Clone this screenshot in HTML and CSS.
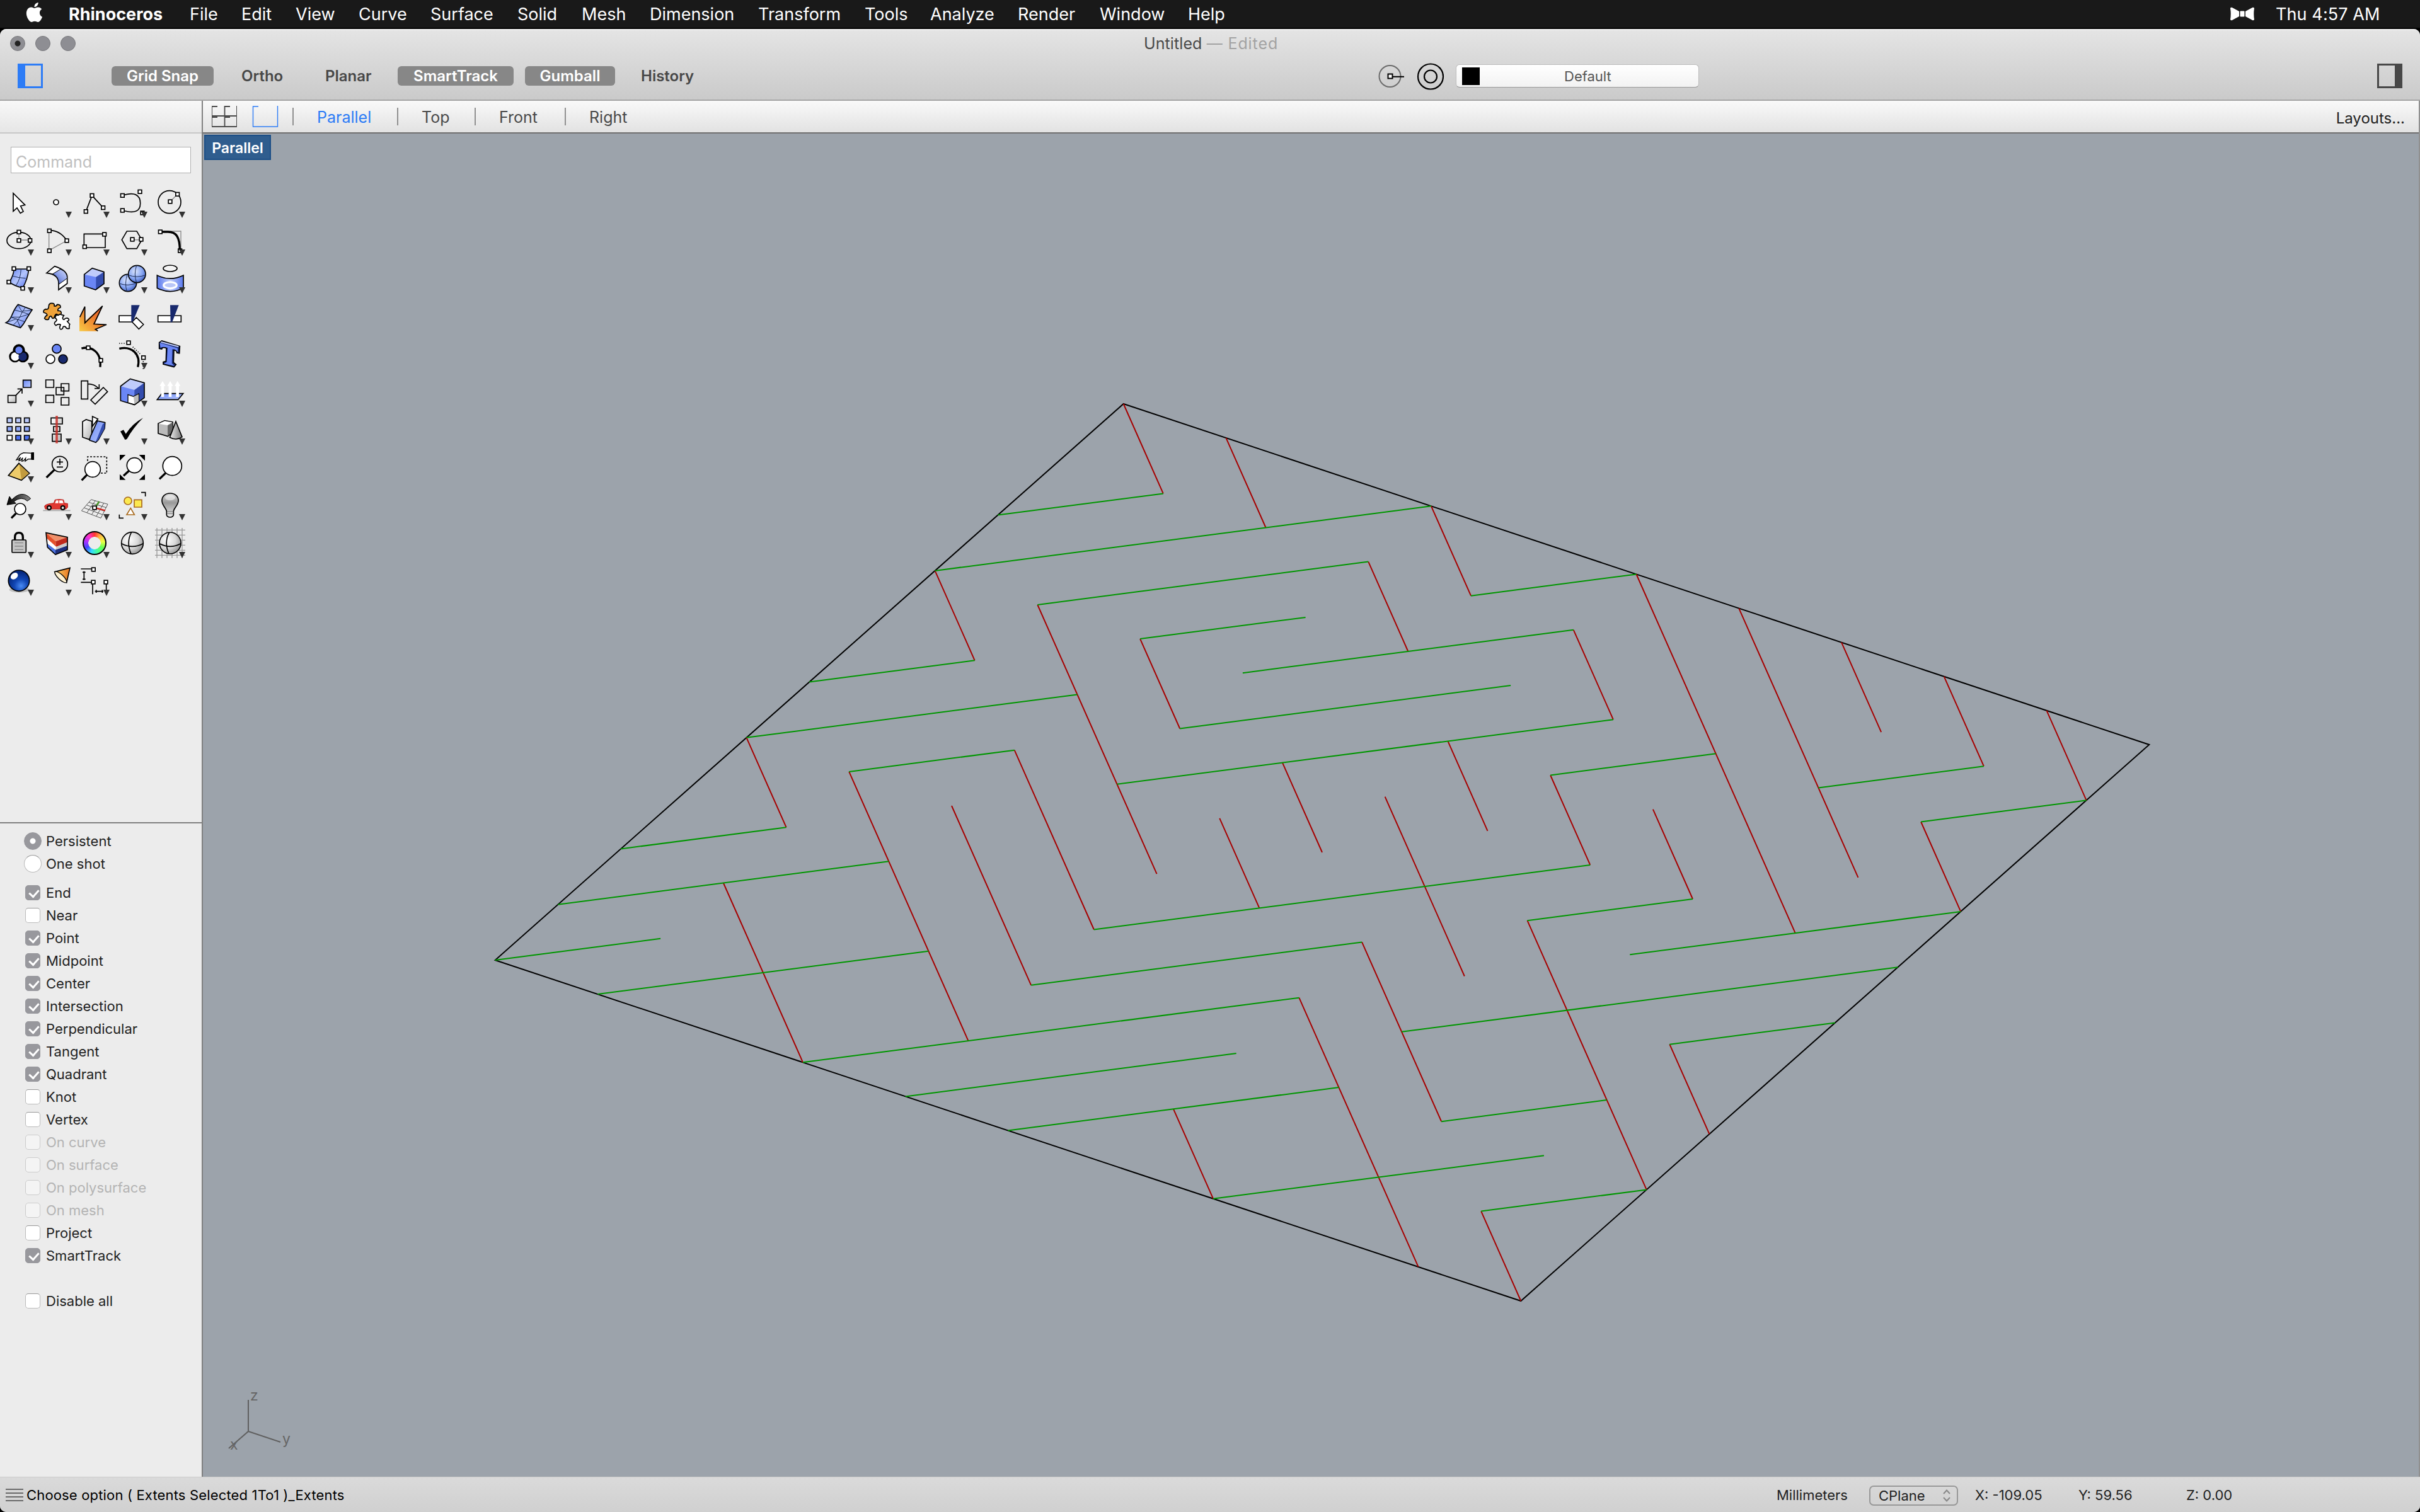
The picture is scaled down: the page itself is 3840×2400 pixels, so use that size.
FILE: index.html
```html
<!DOCTYPE html>
<html lang="en">
<head>
<meta charset="utf-8">
<title>Untitled — Rhinoceros</title>
<link rel="stylesheet" href="styles.css">
</head>
<body>
<svg class="defs" width="0" height="0" aria-hidden="true">
  <defs>
    <rect id="h" x="-8.5" y="-8.5" width="17" height="17" fill="#fff" stroke="#000" stroke-width="5"/>
    <linearGradient id="blue" x1="0" y1="0" x2="1" y2="1"><stop offset="0" stop-color="#5f7ff0"/><stop offset=".5" stop-color="#b4c5fb"/><stop offset="1" stop-color="#4c6cf0"/></linearGradient>
    <linearGradient id="blueH" x1="0" y1="0" x2="1" y2="0"><stop offset="0" stop-color="#5878ee"/><stop offset=".5" stop-color="#c3cffb"/><stop offset="1" stop-color="#5878ee"/></linearGradient>
    <linearGradient id="paleBlue" x1="0" y1="0" x2="1" y2="1"><stop offset="0" stop-color="#6a8af8"/><stop offset="1" stop-color="#b9c8fb"/></linearGradient>
    <linearGradient id="bend" x1="1" y1="0" x2="0" y2="1"><stop offset="0" stop-color="#d8e0fc"/><stop offset=".5" stop-color="#8a9ee8"/><stop offset="1" stop-color="#1c3796"/></linearGradient>
    <radialGradient id="ballB" cx=".4" cy=".35" r=".7"><stop offset="0" stop-color="#dbe5fd"/><stop offset=".6" stop-color="#86a5f2"/><stop offset="1" stop-color="#3b5bbd"/></radialGradient>
    <radialGradient id="ballG" cx=".35" cy=".35" r=".75"><stop offset="0" stop-color="#fff"/><stop offset=".55" stop-color="#d8d8d8"/><stop offset="1" stop-color="#8c8c8c"/></radialGradient>
    <radialGradient id="ballD" cx=".6" cy=".75" r=".8"><stop offset="0" stop-color="#4a8cf4"/><stop offset=".4" stop-color="#1146b4"/><stop offset="1" stop-color="#001c68"/></radialGradient>
    <linearGradient id="grey" x1="0" y1="0" x2="1" y2="1"><stop offset="0" stop-color="#fff"/><stop offset="1" stop-color="#b5b5b5"/></linearGradient>
    <linearGradient id="greyH" x1="0" y1="0" x2="1" y2="0"><stop offset="0" stop-color="#eee"/><stop offset="1" stop-color="#777"/></linearGradient>
    <linearGradient id="bulb" x1="0" y1="0" x2="0" y2="1"><stop offset="0" stop-color="#ddd"/><stop offset=".4" stop-color="#999"/><stop offset="1" stop-color="#eee"/></linearGradient>
    <linearGradient id="fire" x1="0" y1="1" x2="1" y2="0"><stop offset="0" stop-color="#f8cb45"/><stop offset=".55" stop-color="#ee7a2c"/><stop offset="1" stop-color="#e3552a"/></linearGradient>
    <linearGradient id="cone" x1="0" y1="0" x2="1" y2="0"><stop offset="0" stop-color="#fbd26a"/><stop offset="1" stop-color="#e8741e"/></linearGradient>
    <linearGradient id="swoosh" x1="0" y1="0" x2="1" y2="0"><stop offset="0" stop-color="#000"/><stop offset="1" stop-color="#888"/></linearGradient>
  </defs>
</svg>

<header class="menubar">
  <svg class="apple" viewBox="0 0 24 24"><path d="M12.152 6.896c-.948 0-2.415-1.078-3.96-1.04-2.04.027-3.91 1.183-4.961 3.014-2.117 3.675-.546 9.103 1.519 12.09 1.013 1.454 2.208 3.09 3.792 3.039 1.52-.065 2.09-.987 3.935-.987 1.831 0 2.35.987 3.96.948 1.637-.026 2.676-1.48 3.676-2.948 1.156-1.688 1.636-3.325 1.662-3.415-.039-.013-3.182-1.221-3.22-4.857-.026-3.04 2.48-4.494 2.597-4.559-1.429-2.09-3.623-2.324-4.39-2.376-2-.156-3.675 1.09-4.61 1.09zM15.53 3.83c.843-1.012 1.4-2.427 1.245-3.83-1.207.052-2.662.805-3.532 1.818-.78.896-1.454 2.338-1.273 3.714 1.338.104 2.715-.688 3.559-1.701"/></svg>
  <nav class="menus">
    <b>Rhinoceros</b><span>File</span><span>Edit</span><span>View</span><span>Curve</span><span>Surface</span><span>Solid</span><span>Mesh</span><span>Dimension</span><span>Transform</span><span>Tools</span><span>Analyze</span><span>Render</span><span>Window</span><span>Help</span>
  </nav>
  <svg class="bow" viewBox="0 0 40 22"><path d="M1 2Q2 0 4 1L15 7V15L4 21Q2 22 1 20Q2.500 11 1 2ZM39 2Q38 0 36 1L25 7V15L36 21Q38 22 39 20Q37.500 11 39 2Z"/><rect x="16.500" y="6.500" width="7" height="9" rx="1"/></svg>
  <span class="clock">Thu 4:57 AM</span>
</header>

<div class="window">
  <div class="titlebar">
    <div class="title"><div class="lights"><i class="dirty"></i><i></i><i></i></div><p>Untitled <span>— Edited</span></p></div>
    <div class="toolbar">
      <svg class="panel left" viewBox="0 0 40 39"><path d="M0 0H40V39H0ZM12 3V36H37V3Z" fill-rule="evenodd"/></svg>
      <div class="toggles">
        <span class="on t1">Grid Snap</span><span class="t2">Ortho</span><span class="t3">Planar</span><span class="on t4">SmartTrack</span><span class="on t5">Gumball</span><span class="t6">History</span>
      </div>
      <svg class="rings" viewBox="0 0 104 44"><circle cx="17.500" cy="22" r="17" fill="none" stroke="#6c6c6c" stroke-width="2"/><path d="M21 22.800H40" stroke="#000" stroke-width="2"/><rect x="14.500" y="18.500" width="7" height="7" fill="#fff" stroke="#000" stroke-width="2"/><g fill="none" stroke="#000" stroke-width="2.200"><circle cx="82" cy="22.500" r="20"/><circle cx="82" cy="22.500" r="10"/></g></svg>
      <div class="layer"><i></i><span>Default</span></div>
      <svg class="panel right" viewBox="0 0 40 39"><path d="M0 0H40V39H0ZM3 3V36H28V3Z" fill-rule="evenodd"/></svg>
    </div>
  </div>

  <div class="main">
    <aside class="sidebar">
      <div class="sidehead"></div>
      <div class="command">Command</div>
      <div class="tools">
        <!-- select / points / curves -->
        <div><svg viewBox="0 213 180 180"><path d="M63 260V346L81 330L97 355L111 347L98 321L119 316Z" fill="#fff" stroke="#000" stroke-width="5"/></svg></div>
        <div class="m"><svg viewBox="180 213 180 180"><circle cx="267" cy="303" r="12" fill="#fff" stroke="#000" stroke-width="5"/></svg></div>
        <div class="m"><svg viewBox="360 213 180 180"><path class="k" d="M409 347L438 271L491 329"/><use href="#h" x="409" y="347"/><use href="#h" x="438" y="271"/><use href="#h" x="491" y="329"/></svg></div>
        <div class="m"><svg viewBox="540 213 180 180"><path class="k" d="M583 271C640 252 668 268 668 308C668 348 640 358 583 342"/><use href="#h" x="583" y="271"/><use href="#h" x="583" y="342"/><use href="#h" x="666" y="253"/><use href="#h" x="678" y="354"/></svg></div>
        <div class="m"><svg viewBox="720 213 180 180"><circle class="k" cx="807" cy="302" r="54"/><path class="g" d="M810 300L845 265"/><use href="#h" x="810" y="300"/><use href="#h" x="845" y="265"/></svg></div>

        <div class="m"><svg viewBox="0 393 180 180"><ellipse class="k" cx="90" cy="485" rx="57" ry="39"/><path class="g" d="M90 445V483H143"/><use href="#h" x="90" y="445"/><use href="#h" x="90" y="485"/><use href="#h" x="143" y="485"/></svg></div>
        <div class="m"><svg viewBox="180 393 180 180"><path class="g" d="M233 440V533L318 486"/><path class="k" d="M235 437Q286 437 318 485"/><use href="#h" x="235" y="439"/><use href="#h" x="235" y="534"/><use href="#h" x="318" y="486"/></svg></div>
        <div class="m"><svg viewBox="360 393 180 180"><path class="k" d="M400 454H501V519H400Z"/><use href="#h" x="497" y="456"/><use href="#h" x="403" y="515"/></svg></div>
        <div class="m"><svg viewBox="540 393 180 180"><path class="k" d="M580 482L604 441H651L675 482L651 524H604Z"/><path class="g" d="M630 482H672"/><use href="#h" x="630" y="480"/><use href="#h" x="672" y="480"/></svg></div>
        <div class="m"><svg viewBox="720 393 180 180"><path class="g" d="M763 441H861V534"/><path class="k bold" d="M763 444H800C840 444 856 470 856 534"/><use href="#h" x="763" y="444"/><use href="#h" x="857" y="534"/></svg></div>

        <!-- surfaces / solids -->
        <div class="m"><svg viewBox="0 573 180 180"><path d="M66 621H137Q132 670 108 711Q74 704 44 684Q66 650 66 621Z" fill="url(#blue)" stroke="#000" stroke-width="5"/><path d="M100 621Q98 668 76 700M58 654Q90 664 122 665" class="n"/><use href="#h" x="66" y="619"/><use href="#h" x="137" y="619"/><use href="#h" x="42" y="683"/><use href="#h" x="108" y="713"/></svg></div>
        <div class="m"><svg viewBox="180 573 180 180"><path d="M260 608Q322 628 320 662V690L279 720V690Q280 646 222 640Z" fill="#fff" stroke="#000" stroke-width="5"/><path d="M288 622Q320 636 320 665L280 694Q280 654 250 645Z" fill="url(#bend)" stroke="#000" stroke-width="3"/></svg></div>
        <div class="m"><svg viewBox="360 573 180 180"><path d="M401 647L439 617L495 635V691L455 720L401 702Z" fill="#6a86f5"/><path d="M401 647L439 617L495 635L457 659Z" fill="#c0ccfb"/><path d="M457 659L495 635V691L457 720Z" fill="#344dae"/><path class="k" d="M401 647L439 617L495 635V691L455 720L401 702Z"/></svg></div>
        <div class="m"><svg viewBox="540 573 180 180"><circle cx="609" cy="687" r="41" fill="url(#ballB)" stroke="#000" stroke-width="5"/><path class="n" d="M568 690Q609 705 650 688M606 646Q592 690 604 728"/><circle cx="652" cy="645" r="41" fill="url(#ballB)" stroke="#000" stroke-width="5"/><path class="n" d="M611 650Q652 665 693 650M650 604Q636 646 650 686"/></svg></div>
        <div class="m"><svg viewBox="720 573 180 180"><ellipse cx="810" cy="618" rx="33" ry="15" fill="#f4f4f4" stroke="#000" stroke-width="5"/><path d="M748 651Q810 682 873 651V712Q810 744 748 712Z" fill="url(#blueH)" stroke="#000" stroke-width="5"/><ellipse cx="810" cy="698" rx="31" ry="15" fill="#b9c6f7" stroke="#fff" stroke-width="9"/></svg></div>

        <div class="m"><svg viewBox="0 753 180 180"><path d="M86 790L153 815Q140 834 126 858Q116 880 97 901L28 877Q48 866 58 838Q70 808 86 790Z" fill="url(#blue)" stroke="#000" stroke-width="5"/><path class="n" d="M122 802Q104 826 94 850Q82 874 62 889M67 815L138 836M50 850L118 872M86 792L103 822L150 818M50 850L94 850L138 836M30 876L80 858L97 900"/></svg></div>
        <div><svg viewBox="180 753 180 180"><path d="M232 798Q232 784 246 784Q262 784 258 797Q268 800 272 790Q290 790 288 804Q272 810 276 820Q292 818 292 832Q284 846 270 836Q262 836 258 852Q250 862 244 846Q234 844 232 860Q218 866 212 856Q216 844 224 842Q226 832 208 828Q204 816 218 812Q232 816 232 798Z" fill="#efa33b" stroke="#000" stroke-width="5"/><path d="M268 838Q276 846 284 836L304 842Q292 858 304 862Q316 850 326 858Q332 866 320 870Q328 880 332 884Q328 890 330 904Q316 908 312 896Q300 890 298 904Q286 914 284 900L288 886Q278 880 266 890Q252 880 266 870Q276 862 262 854Z" fill="#fff" stroke="#000" stroke-width="5"/></svg></div>
        <div><svg viewBox="360 753 180 180"><path d="M378 855L403 800L407 868L488 797L451 884L507 886L454 907L466 917H378Z" fill="url(#fire)"/><path class="k" d="M380 850L404 800V878L488 797L447 883L507 886L454 908L466 916"/></svg></div>
        <div><svg viewBox="540 753 180 180"><path d="M567 843H630V873H567ZM649 852L683 885L661 907L629 873Z" fill="#fff" stroke="#000" stroke-width="5"/><path d="M625 793H665L634 868L625 875Z" fill="#18296d"/></svg></div>
        <div><svg viewBox="720 753 180 180"><path d="M752 843H862V873H752Z" fill="#fff" stroke="#000" stroke-width="5"/><path d="M810 793H851L820 873L812 875Z" fill="#18296d"/></svg></div>

        <!-- booleans / points / text -->
        <div class="m"><svg viewBox="0 933 180 180"><g stroke="#000" stroke-width="14"><circle cx="90" cy="1008" r="22"/><circle cx="71" cy="1038" r="21"/><circle cx="109" cy="1038" r="21"/></g><circle cx="72" cy="1038" r="20" fill="#fff"/><circle cx="108" cy="1038" r="20" fill="#18296d"/><circle cx="90" cy="1007" r="19" fill="#6a86f5" stroke="#000" stroke-width="4"/></svg></div>
        <div><svg viewBox="180 933 180 180"><g stroke="#000" stroke-width="5"><circle cx="270" cy="1001" r="21" fill="#6a86f5"/><circle cx="240" cy="1050" r="21" fill="#fff"/><circle cx="300" cy="1050" r="21" fill="#18296d"/></g></svg></div>
        <div><svg viewBox="360 933 180 180"><path class="k bold" d="M388 999C430 988 484 1010 477 1088"/><use href="#h" x="420" y="996"/><use href="#h" x="480" y="1056"/></svg></div>
        <div class="m"><svg viewBox="540 933 180 180"><path class="k bold" d="M568 1000C626 986 672 1026 656 1088"/><path class="k" stroke-dasharray="4 7" d="M567 975H600M632 992L672 1030M682 1060V1100"/><use href="#h" x="612" y="972"/><use href="#h" x="683" y="1043"/></svg></div>
        <div><svg viewBox="720 933 180 180"><path d="M758 971L770 963L856 989L854 1022L842 1020Q844 1010 828 1006L826 1066L838 1076L828 1088L777 1074V1064L790 1060L792 998Q774 990 770 1002L758 1000Z" fill="#18296d" stroke="#000" stroke-width="5"/><path d="M760 972L846 998V1018Q838 1002 820 1003L818 1070L830 1082L780 1072L794 1064L798 996Q774 988 764 996Z" fill="#6a86f5"/><path d="M766 968L850 991" stroke="#c0ccfb" stroke-width="6"/></svg></div>

        <!-- transforms -->
        <div class="m"><svg viewBox="0 33 180 180"><path d="M38 143H76V177H38Z" fill="url(#grey)" stroke="#000" stroke-width="5"/><path d="M110 70H148V105H110Z" fill="url(#paleBlue)" stroke="#000" stroke-width="5"/><path class="k" d="M76 142L104 113M83 112H105V134"/></svg></div>
        <div><svg viewBox="180 33 180 180"><path class="k" d="M218 69H256V105H218ZM291 87H328V122H291ZM267 105H304V140H267ZM218 142H256V177H218ZM291 153H328V189H291Z"/></svg></div>
        <div><svg viewBox="360 33 180 180"><path class="k" d="M387 74H418V160H387ZM492 105L512 125L453 185L432 165ZM418 88Q448 88 468 108M472 90V110H450"/></svg></div>
        <div class="m"><svg viewBox="540 33 180 180"><path d="M574 99L620 64L687 83V154L640 188L574 168Z" fill="#6a86f5"/><path d="M574 99L620 64L687 83L640 117Z" fill="#c0ccfb"/><path d="M640 117L687 83V154L640 188Z" fill="#344dae"/><path d="M609 139L635 148L661 135V173L642 187L609 178Z" fill="#fff" stroke="#000" stroke-width="4"/><path d="M636 150L660 138V172L640 185Z" fill="#bbb"/><path class="k" d="M574 99L620 64L687 83V154L640 188L574 168Z"/></svg></div>
        <div class="m"><svg viewBox="720 33 180 180"><path d="M770 134H872L848 163H748Z" fill="url(#paleBlue)" stroke="#000" stroke-width="5"/><path d="M767 150V98H760L774 74L788 98H781V150ZM803 150V98H796L810 74L824 98H817V150ZM838 150V98H831L845 74L859 98H852V150Z" fill="#fff"/></svg></div>

        <!-- array / align / analyse -->
        <div class="m"><svg viewBox="0 213 180 180"><g stroke="#000" stroke-width="5"><path fill="#b9c8fb" d="M34 250H58V273H34ZM75 250H99V273H75ZM116 250H140V273H116Z"/><path fill="#93aafa" d="M34 291H58V314H34ZM75 291H99V314H75ZM116 291H140V314H116Z"/><path fill="#fff" d="M34 333H58V356H34Z"/><path fill="#4d70f0" d="M75 333H99V356H75ZM116 333H140V356H116Z"/></g></svg></div>
        <div class="m"><svg viewBox="180 213 180 180"><path d="M243 250H297V279H243ZM255 291H285V315H255ZM249 327H291V362H249Z" fill="url(#grey)" stroke="#000" stroke-width="5"/><path d="M270 240V371" stroke="#c8322b" stroke-width="11" opacity=".85"/></svg></div>
        <div class="m"><svg viewBox="360 213 180 180"><path d="M440 243L466 255L440 290Z" fill="#fff" stroke="#000" stroke-width="5"/><path d="M393 268L410 258L437 266V345L422 352L393 342Z" fill="url(#grey)" stroke="#000" stroke-width="5"/><path d="M464 264L500 272L498 300L468 355L456 367L426 356L430 340Z" fill="url(#paleBlue)" stroke="#000" stroke-width="5"/><path d="M489 279L498 274V300L466 358L456 364Z" fill="#344dae"/></svg></div>
        <div class="m"><svg viewBox="540 213 180 180"><path d="M573 314L588 307L599 326Q632 276 681 250Q632 300 604 351L595 354Z" fill="#000"/></svg></div>
        <div class="m"><svg viewBox="720 213 180 180"><path d="M753 277L784 263L822 270V318L799 338L753 324Z" fill="#bbb" stroke="#000" stroke-width="5"/><path d="M755 278L784 265L820 271L797 285Z" fill="#fff"/><path d="M798 286L821 272V318L798 336Z" fill="#666"/><path d="M837 267L867 341Q840 360 808 343Z" fill="url(#greyH)" stroke="#000" stroke-width="5"/></svg></div>

        <!-- view controls -->
        <div class="m"><svg viewBox="0 393 180 180"><path d="M90 466L140 514L102 547L40 524Z" fill="#edcb6a" stroke="#000" stroke-width="5"/><path d="M92 472L138 514L102 544Z" fill="#c29b3e"/><path d="M150 418L112 416L96 424L78 450L86 448L98 438L90 454L98 452L108 440L104 456L112 454L122 442L120 456L134 446H150Z" fill="#fff" stroke="#000" stroke-width="4"/><path d="M149 414H162V450H149Z"/></svg></div>
        <div><svg viewBox="180 393 180 180"><path class="k bold" d="M221 534L260 496"/><circle cx="285" cy="470" r="37" fill="none" stroke="#000" stroke-width="5"/><path class="k" d="M285 444V474M270 460H300M270 484H300"/></svg></div>
        <div><svg viewBox="360 393 180 180"><path class="k" stroke-dasharray="9 7" d="M417 455V435H508V513H480"/><path class="k bold" d="M389 547L415 520"/><circle cx="441" cy="495" r="37" fill="#fff" stroke="#000" stroke-width="5"/></svg></div>
        <div><svg viewBox="540 393 180 180"><path d="M570 426H598L570 454ZM690 426V454L662 426ZM570 545V518L598 545ZM690 545H662L690 518Z"/><path class="k bold" d="M588 526L614 502"/><circle cx="640" cy="476" r="36" fill="#fff" stroke="#000" stroke-width="5"/></svg></div>
        <div><svg viewBox="720 393 180 180"><path class="k bold" d="M759 541L790 511"/><circle cx="820" cy="479" r="45" fill="#fff" stroke="#000" stroke-width="5"/></svg></div>

        <div class="m"><svg viewBox="0 573 180 180"><path d="M33 664L45 624L56 640Q104 590 146 634L130 646Q104 620 66 648L76 657Z" fill="url(#swoosh)" stroke="#000" stroke-width="3"/><path class="k bold" d="M54 727L76 705"/><circle cx="96" cy="684" r="27" fill="#fff" stroke="#000" stroke-width="5"/></svg></div>
        <div class="m"><svg viewBox="180 573 180 180"><path d="M205 691H335" stroke="#aaa" stroke-width="5"/><path d="M212 672Q212 660 256 656L262 640Q282 636 302 640L306 656L322 658V676L314 684H216Z" fill="#e03832" stroke="#b8211d" stroke-width="3"/><path d="M262 656L267 643H278V656ZM282 656V643H298L302 656Z" fill="#fff"/><g fill="#ddd" stroke="#000" stroke-width="6"><circle cx="234" cy="678" r="9"/><circle cx="299" cy="678" r="9"/></g></svg></div>
        <div class="m"><svg viewBox="360 573 180 180"><path d="M434 639L513 661L480 727L388 692ZM454 644L413 702M474 650L436 711M494 656L458 719M423 652L505 677M412 665L497 694M400 678L489 711" fill="none" stroke="#555" stroke-width="3"/><path d="M456 672L472 648" stroke="#4a9a2a" stroke-width="7"/><path d="M460 680L501 691" stroke="#d42a22" stroke-width="7"/><use href="#h" x="450" y="678"/></svg></div>
        <div class="m"><svg viewBox="540 573 180 180"><path class="k" d="M672 605H692V624M568 710V727H588"/><g fill="#fce94f" stroke="#a8691c" stroke-width="5"><circle cx="609" cy="645" r="18"/><path d="M639 640H675V675H639Z"/><path fill="#fff" d="M622 680L640 711H603Z"/></g></svg></div>
        <div class="m"><svg viewBox="720 573 180 180"><path d="M810 609C836 609 850 626 849 646C848 666 828 680 826 694V712Q824 722 810 723Q795 722 793 712V694C791 680 771 666 771 646C770 626 784 609 810 609Z" fill="url(#bulb)" stroke="#000" stroke-width="5"/><path d="M796 696H824M796 706H824" stroke="#777" stroke-width="3"/><ellipse cx="810" cy="630" rx="24" ry="13" fill="#fff" opacity=".5"/></svg></div>

        <!-- display -->
        <div class="m"><svg viewBox="0 753 180 180"><path d="M71 832V818Q71 797 90 797Q109 797 109 818V832" fill="none" stroke="#000" stroke-width="10"/><rect x="57" y="831" width="67" height="60" rx="4" fill="#c4c4c4" stroke="#000" stroke-width="5"/><path d="M70 845H111M70 861H111M70 877H111" stroke="#888" stroke-width="4"/></svg></div>
        <div class="m"><svg viewBox="180 753 180 180"><path d="M219 797L321 818V878L264 901L226 866Z" fill="#fff"/><path d="M219 797L321 818L262 838Z" fill="#f0906a"/><path d="M219 797L264 838L268 864L221 822Z" fill="#e5502a"/><path d="M264 838L321 818V842L268 864Z" fill="#bf2a1c"/><path d="M222 846L264 878L321 858V878L264 901L226 868Z" fill="#4b72e0"/><path d="M264 878L321 858V878L264 901Z" fill="#1d2f7c"/><path d="M268 864L321 842V858L264 878Z" fill="#ccc"/><path class="k" d="M219 797L321 818V878L264 901L226 866Z"/></svg></div>
        <div class="m wheel"><i></i></div>
        <div><svg viewBox="540 753 180 180"><circle cx="630" cy="846" r="52" fill="url(#ballG)" stroke="#000" stroke-width="5"/><path class="k" d="M578 848Q630 876 682 848M626 794Q600 842 624 898"/></svg></div>
        <div class="m"><svg viewBox="720 753 180 180"><path d="M747 774V917M771 774V917M795 774V917M819 774V917M843 774V917M867 774V917M738 784H882M738 808H882M738 832H882M738 856H882M738 880H882M738 904H882" stroke="#999" stroke-width="4"/><circle cx="810" cy="846" r="51" fill="url(#ballG)" stroke="#000" stroke-width="5"/><path class="k" d="M759 848Q810 876 861 848M806 795Q780 842 804 897"/></svg></div>

        <div class="m"><svg viewBox="0 933 180 180"><ellipse cx="92" cy="1068" rx="48" ry="14" fill="#000" opacity=".18"/><circle cx="90" cy="1025" r="50" fill="url(#ballD)" stroke="#000" stroke-width="5"/><ellipse cx="68" cy="1003" rx="19" ry="14" fill="#fff" transform="rotate(-38 68 1003)"/></svg></div>
        <div class="m"><svg viewBox="180 933 180 180"><path d="M261 983L333 964L317 1034Z" fill="url(#cone)" stroke="#000" stroke-width="5"/><ellipse cx="289" cy="1008" rx="37" ry="12" transform="rotate(43 289 1008)" fill="#fdf0d0" stroke="#000" stroke-width="4"/></svg></div>
        <div class="m"><svg viewBox="360 933 180 180"><path class="k" d="M385 969H444M385 1033H444M400 980V1022M393 985H407M393 1018H407M441 1033V1090M506 1033V1080M452 1076H492M458 1069V1083M487 1069V1083"/><use href="#h" x="445" y="972"/><use href="#h" x="444" y="1032"/><use href="#h" x="504" y="1032"/></svg></div>
      </div>

      <div class="osnaps">
        <label class="radio sel"><i></i>Persistent</label>
        <label class="radio"><i></i>One shot</label>
        <div class="checks">
          <label class="c"><i></i>End</label>
          <label><i></i>Near</label>
          <label class="c"><i></i>Point</label>
          <label class="c"><i></i>Midpoint</label>
          <label class="c"><i></i>Center</label>
          <label class="c"><i></i>Intersection</label>
          <label class="c"><i></i>Perpendicular</label>
          <label class="c"><i></i>Tangent</label>
          <label class="c"><i></i>Quadrant</label>
          <label><i></i>Knot</label>
          <label><i></i>Vertex</label>
          <label class="off"><i></i>On curve</label>
          <label class="off"><i></i>On surface</label>
          <label class="off"><i></i>On polysurface</label>
          <label class="off"><i></i>On mesh</label>
          <label><i></i>Project</label>
          <label class="c"><i></i>SmartTrack</label>
          <label class="last"><i></i>Disable all</label>
        </div>
      </div>
    </aside>

    <section class="content">
      <div class="tabs">
        <svg class="four" viewBox="0 0 41 34"><path d="M0 1H9M20 1H29M0 16H40M0 18H9M20 18H29M0 33H40" fill="none" stroke="#4a4a4a" stroke-width="2"/><path d="M.500 0V34M39.500 0V34" stroke="#4a4a4a"/><path d="M20.500 0V34" stroke="#4a4a4a" stroke-width="1.800"/></svg>
        <svg class="one" viewBox="0 0 41 34"><path d="M9 1H.500V33H39.500V0" fill="none" stroke="#2d7cf6" stroke-width="1.400"/></svg>
        <span class="active">Parallel</span><span class="top">Top</span><span class="front">Front</span><span class="rt">Right</span>
        <span class="layouts">Layouts...</span>
      </div>
      <div class="viewport">
        <span class="vlabel">Parallel</span>
        <svg class="scene" viewBox="322 212 3516 2132">
          <!-- 10 x 10 ground grid, projected by the matrix below -->
          <g transform="matrix(162.76 54.1 -99.7 88.3 1782.7 641)" fill="none">
            <path stroke="#000" d="M0 0H10V10H0Z"/>
            <path stroke="#a60000" d="M0 0L1 1M1 0L2 1M3 0L4 1M0 3L1 4M1 3L4 6M2 3L3 4M3 1L4 2M5 1L6 2M5 0L9 4M6 0L9 3M7 0L8 1M8 0L9 1M9 0L10 1M0 6L1 7M1 6L4 9M2 5L4 7M2 6L4 8M1 8L3 10M4 5L5 6M4 4L5 5M5 4L7 6M5 3L6 4M6 3L7 4M7 3L8 4M9 2L10 3M7 5L10 8M6 6L8 8M6 7L9 10M6 9L7 10M9 6L10 7M9 9L10 10"/>
            <path stroke="#009600" d="M0 2L1 1M0 3L3 0M1 3L3 1M2 3L3 2M3 3L5 1M3 4L5 2M3 5L6 2M0 5L1 4M0 6L2 4M4 1L5 0M1 6L2 5M0 8L1 7M0 9L2 7M0 10L1 9M1 10L3 8M3 10L6 7M4 10L6 8M5 10L7 8M7 10L9 8M4 8L6 6M4 7L7 4M6 3L7 2M8 2L9 1M9 2L10 1M8 5L10 3M7 5L8 4M7 7L10 4M9 6L10 5M8 8L9 7M9 9L10 8"/>
          </g>
          <path d="M394 2222V2272L363 2299M394 2272L445 2289" fill="none" stroke="#606060" stroke-width="2"/>
          <g class="axis"><text x="397" y="2223">z</text><text x="448" y="2292">y</text><text x="365" y="2301">x</text></g>
        </svg>
      </div>
    </section>
  </div>

  <footer class="status">
    <svg class="burger" viewBox="0 0 28 20"><path d="M0 1H28M0 7H28M0 13H28M0 19H28" stroke="#6a6a6a" stroke-width="2"/></svg>
    <span class="prompt">Choose option ( Extents Selected 1To1 )_Extents</span>
    <span class="units">Millimeters</span>
    <span class="plane">CPlane<svg viewBox="0 0 14 20"><path d="M2 7L7 1.500L12 7M2 13L7 18.500L12 13" fill="none" stroke="#888" stroke-width="2"/></svg></span>
    <span class="x">X: -109.05</span><span class="y">Y: 59.56</span><span class="z">Z: 0.00</span>
  </footer>
</div>
</body>
</html>
```
FILE: styles.css
```css
* { box-sizing: border-box; }
body {
  margin: 0;
  width: 3840px;
  height: 2400px;
  overflow: hidden;
  background: #000;
  font: 22px/1 Inter, "Liberation Sans", sans-serif;
  color: #222;
  display: flex;
  flex-direction: column;
}
.defs { position: absolute; }
svg { display: block; overflow: visible; flex: none; }
span, b { white-space: nowrap; }
.k { fill: none; stroke: #000; stroke-width: 5; }
.bold { stroke-width: 10; }
.g { fill: none; stroke: #888; stroke-width: 4; }
.n { fill: none; stroke: #1c2c55; stroke-width: 3; }

/* menu bar */
.menubar {
  height: 46px;
  background: #191919;
  border-bottom: 2px solid #000;
  color: #fff;
  fill: #fff;
  font-size: 27px;
  display: flex;
  align-items: center;
}
.apple { width: 31px; height: 31px; margin: -5px 0 0 39px; }
.menus {
  margin-left: 39px;
  display: grid;
  grid-template-columns: 192px 82px 86px 100px 114px 138px 102px 108px 172px 169px 104px 139px 130px 140px 80px;
}
.bow { width: 40px; height: 22px; margin-left: auto; }
.clock { margin-left: 33px; width: 229px; letter-spacing: .1px; }

/* window chrome */
.window { flex: 1; display: flex; flex-direction: column; border-radius: 10px; overflow: hidden; background: #ececec; }
.titlebar {
  height: 114px;
  background: linear-gradient(#e4e4e4, #cacaca);
  border-top: 2px solid #f4f4f4;
  border-bottom: 2px solid #a5a5a5;
}
.title { display: flex; align-items: center; height: 42px; }
.title p { margin: 0 0 0 1694px; font-size: 25px; color: #4a4a4a; letter-spacing: .1px; }
.title p span { color: #a3a3a3; letter-spacing: .9px; }
.lights { display: flex; gap: 16px; padding-left: 16px; width: 121px; }
.lights i { width: 24px; height: 24px; border-radius: 50%; background: #8e8e93; border: 1px solid #78787c; }
.lights .dirty { background: radial-gradient(circle, #222 0 4px, #8e8e93 5px); }
.toolbar { display: flex; align-items: center; height: 61px; font-size: 24px; font-weight: 600; color: #484848; }
.panel { width: 40px; height: 39px; }
.panel.left { margin-left: 28px; fill: #2d7cf6; }
.panel.right { margin-left: auto; margin-right: 28px; fill: #484848; }
.toggles { display: flex; align-items: center; margin-left: 109px; width: 1000px; }
.toggles span { height: 31px; line-height: 32px; }
.toggles .on { background: #878787; color: #fff; border-radius: 6px; text-align: center; }
.t1 { width: 162px; }
.t2 { margin-left: 44px; width: 133px; }
.t3 { width: 115px; }
.t4 { width: 184px; }
.t5 { width: 143px; margin-left: 18px; }
.t6 { margin-left: 41px; }
.rings { width: 104px; height: 44px; margin-left: 1011px; }
.layer {
  width: 386px; height: 37px; margin-left: 18px;
  display: flex; align-items: center;
  background: linear-gradient(#fff, #f2f2f2);
  border: 1px solid #bcbcbc; border-bottom-color: #999; border-radius: 6px;
  font-size: 22px; font-weight: 400; color: #555;
}
.layer i { width: 28px; height: 28px; margin-left: 9px; background: #000; }
.layer span { margin-left: 134px; padding-top: 1px; }

.main { flex: 1; display: flex; min-height: 0; }

/* sidebar */
.sidebar { width: 322px; border-right: 2px solid #808080; background: #ececec; display: flex; flex-direction: column; }
.sidehead { height: 52px; background: linear-gradient(#f8f8f8, #e6e6e6); border-bottom: 2px solid #c8c8c8; }
.command {
  margin: 21px 17px 0; height: 42px; padding-left: 7px;
  border: 1px solid #b0b0b0; background: #fff;
  font-size: 25px; line-height: 46px; color: #c0c0c0;
}
.tools { margin-top: 16px; display: grid; grid-template-columns: repeat(5, 60px); grid-auto-rows: 60px; height: 1014px; align-content: start; }
.tools div { position: relative; }
.tools svg { width: 60px; height: 60px; }
.m::after {
  content: ""; position: absolute; left: 44px; top: 45px;
  border: 5px solid transparent; border-top: 10px solid #333; border-bottom: 0;
}
.wheel i {
  display: block; width: 38px; height: 38px; margin: 12px 0 0 11px; border-radius: 50%;
  border: 2px solid #000;
  background: radial-gradient(circle, #ececec 0 9.500px, transparent 10px),
    conic-gradient(#f33, #fb4, #ef4, #6f5, #4f9, #3df, #44f, #a3f, #f3c, #f33);
}
.osnaps { border-top: 2px solid #808080; flex: 1; padding-top: 10px; }
.osnaps label { display: flex; align-items: center; height: 36px; }
.osnaps i { flex: none; width: 24px; height: 24px; margin: 0 9px 0 40px; border-radius: 5px; background: #fff; border: 1px solid #bbb; border-top-color: #999; }
.osnaps .radio i { width: 28px; height: 28px; border-radius: 50%; margin: 0 7px 0 38px; }
.osnaps .sel i { background: radial-gradient(circle, #fff 0 4px, #98989d 5px); border-color: #98989d; }
.checks { padding-top: 10px; }
.osnaps .c i { background: #98989d; border-color: #98989d; position: relative; }
.c i::after {
  content: ""; position: absolute; left: 8px; top: 3px; width: 7px; height: 12px;
  border: solid #fff; border-width: 0 3px 3px 0; transform: rotate(42deg);
}
.off { color: #b4b4b4; }
.osnaps .off i { background: #f4f4f4; border-color: #ccc; }
.osnaps .last { margin-top: 36px; }

/* view tabs */
.content { flex: 1; display: flex; flex-direction: column; border-right: 2px solid #909090; min-width: 0; }
.tabs {
  height: 52px; display: flex; align-items: center;
  background: linear-gradient(#f9f9f9, #e2e2e2);
  border-bottom: 2px solid #707070;
  font-size: 25px; color: #4a4a4a;
}
.four { width: 41px; height: 34px; margin-left: 14px; }
.one { width: 41px; height: 34px; margin-left: 24px; }
.tabs span { border-left: 2px solid #909090; height: 28px; line-height: 30px; padding-left: 37px; }
.tabs .active { margin-left: 22px; width: 166px; color: #2d7cf6; }
.tabs .top { width: 123px; }
.tabs .front { width: 143px; }
.tabs .layouts { border: 0; padding: 0; margin-left: auto; margin-right: 22px; font-size: 24px; color: #222; line-height: 33px; }

/* viewport */
.viewport { flex: 1; position: relative; background: #9ca3ab; min-height: 0; }
.vlabel {
  position: absolute; left: 2px; top: 2px; width: 106px; height: 40px;
  background: #2f5d8e; border: 2px solid #1c4f86; color: #fff;
  font-weight: 600; font-size: 23px; line-height: 39px; text-align: center;
}
.scene { width: 3516px; height: 2132px; }
.scene g path { vector-effect: non-scaling-stroke; stroke-width: 2; }
.axis { fill: #666; font-size: 23px; }

/* status bar */
.status { height: 56px; background: linear-gradient(#dadada, #d0d0d0); border-top: 1px solid #ccc; display: flex; align-items: center; }
.burger { width: 28px; height: 20px; margin-left: 9px; }
.prompt { margin-left: 5px; width: 2777px; color: #000; letter-spacing: .16px; }
.units { width: 147px; }
.plane { width: 141px; height: 32px; margin-top: 2px; border: 2px solid #999; border-radius: 7px; padding: 0 9px 0 13px; display: flex; align-items: center; justify-content: space-between; }
.plane svg { width: 14px; height: 20px; }
.x { margin-left: 27px; width: 164px; }
.y { width: 171px; }
```
